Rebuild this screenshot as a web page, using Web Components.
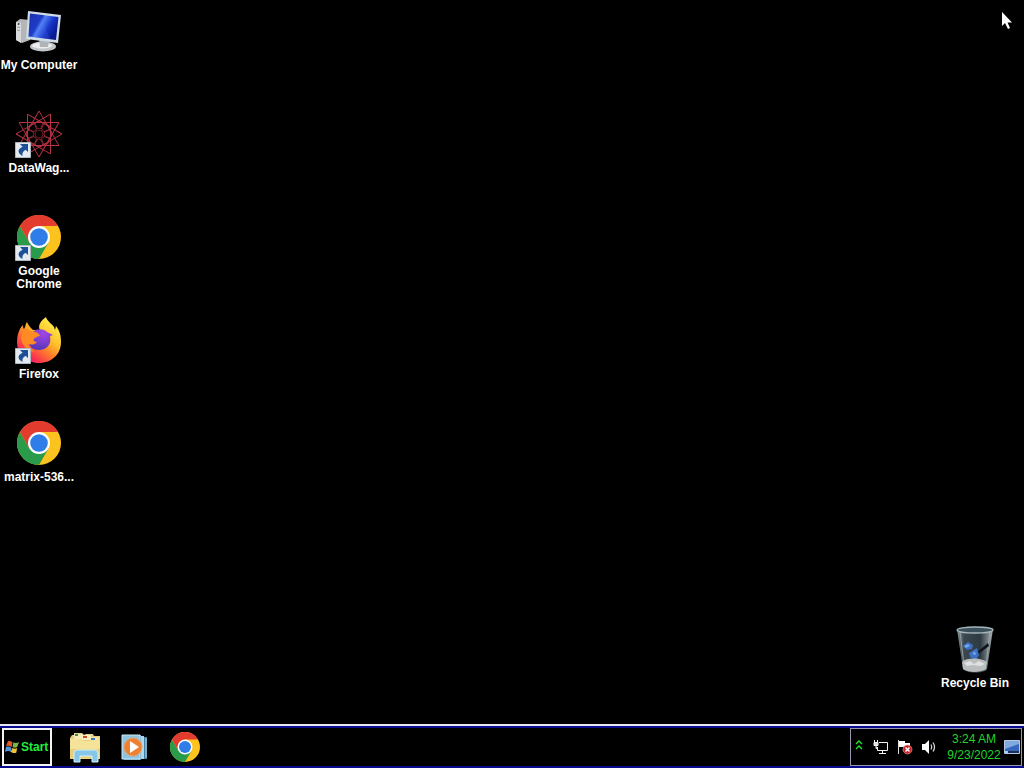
<!DOCTYPE html>
<html lang="en">
<head>
<meta charset="utf-8">
<title>Desktop</title>
<style>
html, body { margin: 0; background: #000; }
body { font-family: "Liberation Sans", Arial, sans-serif; color: #fff; }
</style>
</head>
<body>
<desk-top></desk-top>

<script>
const turns = n => Array.from({ length: n }, (_, i) => i * 360 / n);
const art = {
  chrome: `<svg viewBox="0 0 48 48"><circle cx="24" cy="24" r="24" fill="#fcc31e"/><path d="M3.2 12L13.6 30L34.4 30L24 48A24 24 0 0 1 3.2 12z" fill="#2a9a4b"/><path d="M3.2 12A24 24 0 0 1 44.8 12L24 12L24 24L13.6 30z" fill="#e33b2e"/><circle cx="24" cy="24" r="12" fill="#fff"/><circle cx="24" cy="24" r="9.6" fill="#2f7de8"/></svg>`,
  computer: `<svg viewBox="0 0 48 48">
    <defs><linearGradient id="s" x1="0" y1="0" x2="1" y2=".5"><stop offset="0" stop-color="#1024a0"/><stop offset=".4" stop-color="#1530c0"/><stop offset=".5" stop-color="#4f7ff4"/><stop offset=".75" stop-color="#1734c8"/><stop offset="1" stop-color="#0a1a90"/></linearGradient></defs>
    <path d="M1 14L5 11L15 12V32L7 35L1 32z" fill="#b4b7ba"/><path d="M1 14L6 15V35L1 32z" fill="#d8dadb"/><path d="M2 19l3 .6M2 22l3 .6" stroke="#999"/><circle cx="3.600" cy="16" r="1" fill="#444"/>
    <ellipse cx="28" cy="38.500" rx="13" ry="5" fill="#c2c6c9"/><ellipse cx="27" cy="37.500" rx="10" ry="3" fill="#eceeee"/>
    <path d="M24 31L34 33L33 39H25z" fill="#aeb4b8"/>
    <path d="M13 3L46 7L43 35L11 31z" fill="#cfdbe5"/><path d="M15 5.500L43.500 9L41 32L13.500 28.500z" fill="url(#s)"/><path d="M15 5.500L26 7L35 31.300L13.500 28.500z" fill="#6c8cff" opacity=".12"/></svg>`,
  wagon: `<svg viewBox="0 0 48 48" fill="none" stroke="#c8384a">
    <g stroke-width="1" opacity=".9">${turns(12).map(a => `<path transform="rotate(${a + 30} 24 23)" d="M24 0L43.900 34.500"/>`).join('')}</g>
    <g stroke-width=".9" opacity=".7">${turns(8).map(a => `<circle transform="rotate(${a} 24 23)" cx="24" cy="14" r="4"/>`).join('')}</g>
    <circle cx="24" cy="23" r="4" fill="#050000" stroke="#6d1720"/></svg>`,
  firefox: `<svg viewBox="0 0 48 48">
    <defs><linearGradient id="f" x1=".85" y1=".1" x2=".2" y2=".95"><stop offset="0" stop-color="#fff04a"/><stop offset=".35" stop-color="#ffc02b"/><stop offset=".6" stop-color="#ff7a2c"/><stop offset=".85" stop-color="#fa3150"/><stop offset="1" stop-color="#e51f78"/></linearGradient>
    <radialGradient id="p" cx=".6" cy=".2" r=".8"><stop offset="0" stop-color="#a445e8"/><stop offset="1" stop-color="#5637b8"/></radialGradient></defs>
    <path d="M31 0C32 4 36 6 39 10L40 13L41 9C45 14 46 19 46 25C46 37 37 46 24 46S2 37 2 25C2 18 4 12 8 8C8 10 8 11 9 12C11 9 10 8 12 5C13 8 15 10 18 13L25 13C22 8 27 3 31 0z" fill="url(#f)"/>
    <path d="M18 15C22 11 29 12 32 15L38 18L35 19C37 29 30 33 24 33C17 33 13 29 15 22L21 20z" fill="url(#p)"/>
    <path d="M9 12C12 12 15 13 17 15C20 14 22 15 25 18C24 20 20 20 19 22C18 24 19 24 22 25C19 29 15 27 13 27C14 31 17 33 20 35C12 34 7 28 6 21z" fill="#ff8b25"/></svg>`,
  bin: `<svg viewBox="0 0 48 48">
    <defs><linearGradient id="g"><stop offset="0" stop-color="#8d979b"/><stop offset=".2" stop-color="#3a474e"/><stop offset=".65" stop-color="#2d3a42"/><stop offset="1" stop-color="#aab1b4"/></linearGradient></defs>
    <path d="M6 3L12 43C16 48 33 48 36 43L42 3z" fill="url(#g)"/>
    <path d="M9 5L13 39M39 5L35 39" stroke="#a9b1b4" opacity=".7"/>
    <path d="M38 20L26 29L25 27L37 17z" fill="#101518"/>
    <path d="M12 20L17 16L22 19L21 23L16 24zM21 25L26 22L28 29L25 34L19 31L18 27z" fill="#3d70c4"/><path d="M13 20l4-2 2 2-4 2zM21 28l3-3 1 4z" fill="#76a7ed"/>
    <path d="M11 36C16 31 31 32 36 36L35 43C30 47 17 47 12 43z" fill="#b9bdbd"/><path d="M13 37l6-2 4 3 5-3 6 3-5 2-7-1-6 1z" fill="#dfe0df"/>
    <ellipse cx="24" cy="4" rx="18" ry="3" fill="#3c505b" stroke="#a5b5bc" stroke-width="1.300"/></svg>`,
  explorer: `<svg viewBox="0 0 32 32">
    <path d="M1 7L3 4H5V2H13L15 4L17 3H24L25 5H31V28H1z" fill="#e8cf7b"/><path d="M5 3h9v5H5z" fill="#f7ebb5"/><path d="M13 4h9v5h-9z" fill="#fbefc0"/><path d="M22 6h8v4h-8z" fill="#f5e3a0"/>
    <path d="M6 3h3v2H6z" fill="#3a9450"/><path d="M14 5h4v2h-4z" fill="#c6502d"/><path d="M22 7h4v2h-4z" fill="#3978c4"/>
    <path d="M1 8H12L14 10H31V28L1 27z" fill="#f6e39a"/><path d="M1 18H31V28L1 27z" fill="#ebcf74"/>
    <path d="M5 31V22Q5 19 8 19H26Q29 19 29 22V31H23V25H11V31z" fill="#86c6e9" stroke="#d4f0fc"/></svg>`,
  media: `<svg viewBox="0 0 28 28">
    <path d="M7 4H26V26H7z" fill="#4380a6"/><path d="M5 3H23V26H5z" fill="#a9d4e8"/><path d="M3 2H20V27H3z" fill="#5093b8"/><path d="M1 2H19V26H1z" fill="#90c4dc" stroke="#c9e8f3"/>
    <path d="M22 5V25M25 5V25" stroke="#b9dfef"/>
    <circle cx="12" cy="14" r="9" fill="#ee8032" stroke="#e9a16d"/><path d="M9 8L18 14L9 20z" fill="#fff"/></svg>`,
  winflag: `<svg viewBox="0 0 16 16"><path d="M3 2C5 1 6 2 8 3L7 8C5 7 4 6 1 7z" fill="#e2582b"/><path d="M9 3C11 4 12 4 15 3L13 8C11 9 10 9 8 8z" fill="#77b842"/><path d="M1 8C4 7 5 8 7 9L6 13C4 12 3 12 0 13z" fill="#5292d8"/><path d="M8 9C10 10 11 10 13 9L12 14C9 15 8 14 6 13z" fill="#efc137"/></svg>`,
  chevrons: `<svg viewBox="0 0 8 12" fill="none" stroke="#25dc2c" stroke-width="1.500"><path d="M1 5L4 2L7 5M1 10L4 7L7 10"/></svg>`,
  network: `<svg viewBox="0 0 16 16" fill="none" stroke="#f2f2f2"><path d="M6 3.500H14.500V11.500H4.500V8M9.500 12V14M6 14.500H13"/><path d="M1.500 1V3M4.500 1V3"/><path d="M1 3.500H5V6.500H1zM3 7V9.500H4.500" fill="#ddd"/></svg>`,
  action: `<svg viewBox="0 0 16 16"><path d="M1 1H2V15H1z" fill="#ddd"/><path d="M2 2H8V4H13V9H7V8H2z" fill="#fff"/><circle cx="10.500" cy="10.500" r="4.500" fill="#c8272a" stroke="#f0a6a2" stroke-width=".6"/><path d="M8.500 8.500L12.500 12.500M12.500 8.500L8.500 12.500" stroke="#fff" stroke-width="1.500"/></svg>`,
  speaker: `<svg viewBox="0 0 16 16"><path d="M1 5H4L8 1V15L4 11H1z" fill="#fff"/><path d="M10 5.500Q11.500 8 10 10.500M12 3.500Q15 8 12 12.500" fill="none" stroke="#ddd" stroke-width="1.200"/></svg>`,
  screen: `<svg viewBox="0 0 16 14"><path d="M.5 .5H15.500V13.500H.5z" fill="#3468bc" stroke="#b5cae6"/><path d="M1 1H15V4L1 9z" fill="#80a9e0"/><path d="M1 11H15V13H1z" fill="#1a2e58"/><path d="M1 11H4V13H1z" fill="#9fd0ee"/></svg>`,
  shortcut: `<svg viewBox="0 0 16 16"><path d="M.5 .5H15.500V15.500H.5z" fill="#e4e9ee" stroke="#aeb8c2"/><path d="M5 2H13V10L10.600 7.800C8 9.500 7 11 7.500 14C2 11 2.500 7 7.600 4.800z" fill="#1b4f98"/></svg>`,
  pointer: `<svg viewBox="0 0 12 20"><path d="M1 1V15L4 12L7 18L9 17L6.500 11.500H11z" fill="#fff"/></svg>`
};

customElements.define('ui-art', class extends HTMLElement {
  connectedCallback() {
    this.attachShadow({ mode: 'open' }).innerHTML =
      `<style>:host{display:block;flex:none}svg{display:block;width:100%;height:100%}</style>${art[this.getAttribute('name')]}`;
  }
});

customElements.define('desk-icon', class extends HTMLElement {
  connectedCallback() {
    const name = this.getAttribute('art');
    this.attachShadow({ mode: 'open' }).innerHTML = `<style>
      :host{display:block;width:78px;height:103px}
      button{all:unset;box-sizing:border-box;display:flex;flex-direction:column;align-items:center;gap:3px;width:100%;padding-top:8px;cursor:default}
      .pic{position:relative;display:grid;place-items:center;width:48px;height:48px}
      .main{width:48px;height:48px}
      .chrome{width:44px;height:44px;margin-bottom:2px}
      .arrow{position:absolute;left:0;bottom:1px;width:16px;height:16px}
      .label{font-size:12px;font-weight:700;line-height:13px;text-align:center;white-space:nowrap;color:#fff}
    </style>
    <button type="button"><span class="pic"><ui-art class="main ${name}" name="${name}"></ui-art>${this.hasAttribute('shortcut') ? '<ui-art class="arrow" name="shortcut"></ui-art>' : ''}</span><span class="label"><slot></slot></span></button>`;
  }
});

customElements.define('start-button', class extends HTMLElement {
  connectedCallback() {
    this.attachShadow({ mode: 'open' }).innerHTML = `<style>
      :host{display:block}
      button{box-sizing:border-box;display:flex;align-items:center;gap:1px;width:50px;height:38px;margin:0;padding:0 1px;border:2px solid #f4f4f4;background:#000;color:#22ee3a;font:700 12px/16px "Liberation Sans",sans-serif}
      ui-art{width:15px;height:16px}
    </style><button type="button"><ui-art name="winflag"></ui-art><span><slot></slot></span></button>`;
  }
});

customElements.define('task-button', class extends HTMLElement {
  connectedCallback() {
    const name = this.getAttribute('art');
    this.attachShadow({ mode: 'open' }).innerHTML = `<style>
      :host{display:block}
      button{all:unset;display:grid;place-items:center;width:50px;height:38px}
      ui-art{width:32px;height:32px}
      .media{width:28px;height:28px}
      .chrome{width:30px;height:30px}
    </style><button type="button" aria-label="${this.getAttribute('label')}"><ui-art class="${name}" name="${name}"></ui-art></button>`;
  }
});

customElements.define('system-tray', class extends HTMLElement {
  connectedCallback() {
    this.attachShadow({ mode: 'open' }).innerHTML = `<style>
      :host{box-sizing:border-box;display:flex;align-items:center;height:38px;padding:0 1px 0 4px;border:1px solid #9898b0}
      button{all:unset;display:block}
      .icons{display:flex;align-items:center;gap:8px}
      .icons ui-art{width:16px;height:16px}
      .icons .more{width:8px;height:12px;margin:0 2px 4px 0}
      time{width:54px;margin:0 3px 0 10px;font:12px/16px "Liberation Sans",sans-serif;text-align:center;color:#1fd52b}
      time span{display:block}
      .show{width:16px;height:14px}
    </style>
    <div class="icons">
      <button type="button" aria-label="Show hidden icons"><ui-art class="more" name="chevrons"></ui-art></button>
      <button type="button" aria-label="Network"><ui-art name="network"></ui-art></button>
      <button type="button" aria-label="Action center"><ui-art name="action"></ui-art></button>
      <button type="button" aria-label="Volume"><ui-art name="speaker"></ui-art></button>
    </div>
    <time datetime="2022-09-23T03:24"><span>3:24 AM</span><span>9/23/2022</span></time>
    <button type="button" aria-label="Show desktop"><ui-art class="show" name="screen"></ui-art></button>`;
  }
});

customElements.define('task-bar', class extends HTMLElement {
  connectedCallback() {
    this.attachShadow({ mode: 'open' }).innerHTML = `<style>
      :host{display:block;border-top:2px solid #e6e6f4;background:#000}
      .bar{display:flex;align-items:center;border:solid #0a0a8c;border-width:2px 0;padding:0 2px;height:38px}
      .pins{display:flex;margin-left:8px;flex:1}
    </style>
    <div class="bar">
      <start-button>Start</start-button>
      <div class="pins">
        <task-button art="explorer" label="Windows Explorer"></task-button>
        <task-button art="media" label="Media Player"></task-button>
        <task-button art="chrome" label="Google Chrome"></task-button>
      </div>
      <system-tray></system-tray>
    </div>`;
  }
});

customElements.define('desk-top', class extends HTMLElement {
  connectedCallback() {
    this.attachShadow({ mode: 'open' }).innerHTML = `<style>
      :host{display:flex;flex-direction:column;min-height:100vh;position:relative}
      main{flex:1;display:flex;justify-content:space-between;padding-right:10px}
      .column{display:flex;flex-direction:column}
      .end{justify-content:flex-end;padding-bottom:3px}
      .pointer{position:absolute;top:11px;right:11px;width:12px;height:20px}
    </style>
    <main>
      <div class="column">
        <desk-icon art="computer">My Computer</desk-icon>
        <desk-icon art="wagon" shortcut>DataWag...</desk-icon>
        <desk-icon art="chrome" shortcut>Google<br>Chrome</desk-icon>
        <desk-icon art="firefox" shortcut>Firefox</desk-icon>
        <desk-icon art="chrome">matrix-536...</desk-icon>
      </div>
      <div class="column end"><desk-icon art="bin">Recycle Bin</desk-icon></div>
    </main>
    <task-bar></task-bar>
    <ui-art class="pointer" name="pointer"></ui-art>`;
  }
});
</script>
</body>
</html>
